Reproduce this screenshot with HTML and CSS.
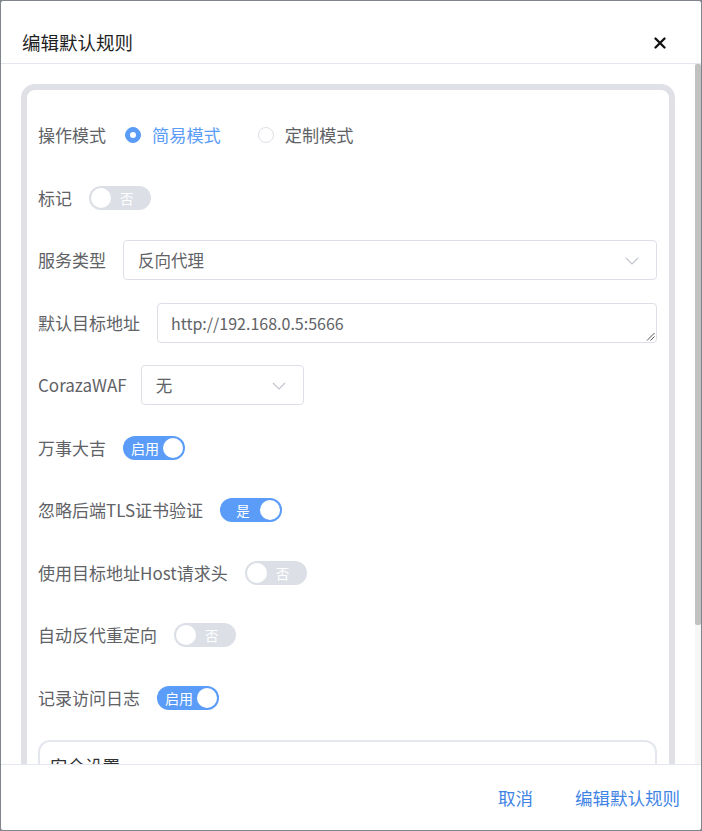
FILE: index.html
```html
<!DOCTYPE html>
<html lang="zh">
<head>
<meta charset="utf-8">
<title>编辑默认规则</title>
<link rel="stylesheet" href="styles.css">
</head>
<body>
<div class="dialog">
  <div class="dlg-header">
    <span class="dlg-title">编辑默认规则</span>
    <svg class="close" width="12" height="12" viewBox="0 0 12 12"><path d="M1.5 1.5 L10.5 10.5 M10.5 1.5 L1.5 10.5" stroke="#111" stroke-width="2.3" stroke-linecap="round"/></svg>
  </div>
  <div class="body-wrap">
    <div class="dlg-body">
      <div class="card">
        <div class="item">
          <span class="label">操作模式</span>
          <span class="radio checked"><span class="dot"></span><span class="rtext">简易模式</span></span>
          <span class="radio second"><span class="dot"></span><span class="rtext">定制模式</span></span>
        </div>
        <div class="item">
          <span class="label">标记</span>
          <span class="sw"><span class="knob"></span><span class="txt off">否</span></span>
        </div>
        <div class="item">
          <span class="label">服务类型</span>
          <div class="select wide"><span>反向代理</span><svg class="chev" width="14" height="8" viewBox="0 0 14 8"><path d="M1 1 L7 7 L13 1" fill="none" stroke="#c0c4cc" stroke-width="1.1"/></svg></div>
        </div>
        <div class="item">
          <span class="label">默认目标地址</span>
          <div class="textarea"><span>http://192.168.0.5:5666</span><svg class="grip" width="9" height="9" viewBox="0 0 9 9"><path d="M8.5 1 L1 8.5 M8.5 4.5 L4.5 8.5" stroke="#555" stroke-width="1"/></svg></div>
        </div>
        <div class="item">
          <span class="label latin">CorazaWAF</span>
          <div class="select waf"><span>无</span><svg class="chev" width="14" height="8" viewBox="0 0 14 8"><path d="M1 1 L7 7 L13 1" fill="none" stroke="#c0c4cc" stroke-width="1.1"/></svg></div>
        </div>
        <div class="item">
          <span class="label">万事大吉</span>
          <span class="sw on"><span class="txt en">启用</span><span class="knob"></span></span>
        </div>
        <div class="item">
          <span class="label">忽略后端TLS证书验证</span>
          <span class="sw on"><span class="txt yes">是</span><span class="knob"></span></span>
        </div>
        <div class="item">
          <span class="label">使用目标地址Host请求头</span>
          <span class="sw"><span class="knob"></span><span class="txt off">否</span></span>
        </div>
        <div class="item">
          <span class="label">自动反代重定向</span>
          <span class="sw"><span class="knob"></span><span class="txt off">否</span></span>
        </div>
        <div class="item">
          <span class="label">记录访问日志</span>
          <span class="sw on"><span class="txt en">启用</span><span class="knob"></span></span>
        </div>
        <div class="subcard">
          <div class="subtitle">安全设置</div>
        </div>
      </div>
    </div>
    <div class="scrollbar"><div class="thumb"></div></div>
  </div>
  <div class="dlg-footer">
    <span class="btn">取消</span>
    <span class="btn">编辑默认规则</span>
  </div>
</div>
</body>
</html>
```

FILE: styles.css
```css
* { box-sizing: border-box; }
html, body { margin: 0; padding: 0; }
body {
  width: 702px;
  height: 831px;
  background: #7b7f86;
  font-family: "Noto Sans CJK SC", "Noto Sans", sans-serif;
  overflow: hidden;
}
.dialog {
  width: 702px;
  height: 831px;
  border: 1px solid #80848b;
  border-radius: 3px;
  background: #fff;
  display: flex;
  flex-direction: column;
  overflow: hidden;
}
.dlg-header {
  height: 63px;
  border-bottom: 1px solid #e4e7ed;
  padding: 29px 0 0 21px;
  display: flex;
  align-items: flex-start;
  justify-content: space-between;
  flex: none;
}
.dlg-title {
  font-size: 18.5px;
  line-height: 24px;
  color: #1f1f1f;
}
.close {
  margin: 7px 35px 0 0;
}
.body-wrap {
  position: relative;
  height: 700px;
  flex: none;
}
.dlg-body {
  height: 700px;
  overflow: hidden;
  padding: 20px 26px 20px 20px;
}
.scrollbar {
  position: absolute;
  top: 0;
  right: 0;
  width: 6px;
  height: 700px;
  background: #f6f6f6;
}
.thumb {
  height: 561px;
  background: #c1c1c1;
  border-radius: 2px;
}
.card {
  width: 654px;
  border: 6px solid #dfe1e7;
  border-radius: 14px;
  padding: 25px 12px 10px 11px;
}
.item {
  height: 40px;
  margin-bottom: 22.5px;
  display: flex;
  align-items: center;
}
.label {
  font-size: 17px;
  line-height: 24px;
  color: #606266;
  padding-right: 17px;
  white-space: nowrap;
  flex: none;
}
.label.latin { padding-right: 14px; font-size: 17px; }
.radio {
  display: inline-flex;
  align-items: center;
  margin-left: 2px;
}
.radio.second { margin-left: 37px; }
.radio .dot {
  width: 16px;
  height: 16px;
  border-radius: 50%;
  border: 1px solid #dcdfe6;
  background: #fff;
  display: inline-flex;
  align-items: center;
  justify-content: center;
}
.radio.checked .dot {
  background: #5a9cf8;
  border-color: #5a9cf8;
}
.radio.checked .dot::after {
  content: "";
  width: 6px;
  height: 6px;
  border-radius: 50%;
  background: #fff;
}
.rtext {
  margin-left: 11px;
  font-size: 17.2px;
  line-height: 24px;
  color: #606266;
}
.radio.checked .rtext { color: #5a9cf8; }
.select, .textarea {
  position: relative;
  height: 40px;
  border: 1px solid #dcdfe6;
  border-radius: 4px;
  display: flex;
  align-items: center;
  color: #606266;
  font-size: 16.5px;
}
.select { padding-left: 14px; }
.select.wide { flex: 1; }
.select.waf { width: 163px; }
.chev {
  position: absolute;
  right: 17px;
  top: 16px;
}
.textarea {
  flex: 1;
  padding-left: 13px;
  font-size: 16px;
}
.grip {
  position: absolute;
  right: 1px;
  bottom: 1px;
}
.sw {
  position: relative;
  width: 62px;
  height: 24px;
  border-radius: 12px;
  background: #dcdfe6;
  flex: none;
}
.sw.on { background: #5a9cf8; }
.sw .knob {
  position: absolute;
  top: 2px;
  left: 2px;
  width: 20px;
  height: 20px;
  border-radius: 50%;
  background: #fff;
}
.sw.on .knob { left: 40px; }
.sw .txt {
  position: absolute;
  top: 0;
  line-height: 24px;
  color: #fff;
  font-size: 13.5px;
}
.txt.off { left: 31px; }
.txt.en { left: 8px; font-size: 14px; }
.txt.yes { left: 16px; }
.subcard {
  height: 161px;
  border: 2px solid #e4e7ed;
  border-radius: 12px;
  padding: 12px 10px;
}
.subtitle {
  font-size: 17.5px;
  line-height: 24px;
  color: #303133;
}
.dlg-footer {
  flex: none;
  height: 66px;
  border-top: 1px solid #e4e7ed;
  display: flex;
  align-items: center;
  justify-content: flex-end;
  gap: 42px;
  padding-right: 21px;
}
.btn {
  font-size: 17.5px;
  line-height: 24px;
  color: #3f84e5;
}
```
